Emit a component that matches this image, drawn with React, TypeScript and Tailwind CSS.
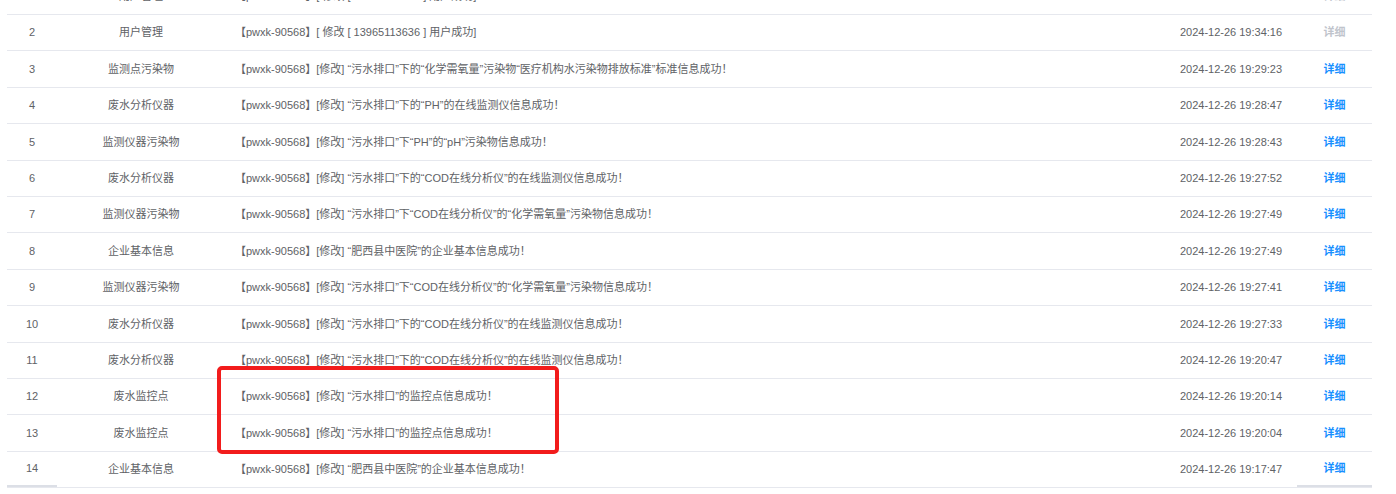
import React from "react";

interface LogRow {
  no: number;
  module: string;
  content: string;
  time: string;
  disabled?: boolean;
}

const PREFIX = "【pwxk-90568】[修改] ";
const PIPE = "“污水排口”下的“COD在线分析仪”的在线监测仪信息成功！";
const POLL = "“污水排口”下“COD在线分析仪”的“化学需氧量”污染物信息成功！";
const ENT = "“肥西县中医院”的企业基本信息成功！";
const POINT = "“污水排口”的监控点信息成功！";

const rows: LogRow[] = [
  { no: 1, module: "用户管理", content: "【pwxk-90568】[ 修改 [ 13965113636 ] 用户成功]", time: "2024-12-26 19:35:02", disabled: true },
  { no: 2, module: "用户管理", content: "【pwxk-90568】[ 修改 [ 13965113636 ] 用户成功]", time: "2024-12-26 19:34:16", disabled: true },
  { no: 3, module: "监测点污染物", content: PREFIX + "“污水排口”下的“化学需氧量”污染物“医疗机构水污染物排放标准”标准信息成功！", time: "2024-12-26 19:29:23" },
  { no: 4, module: "废水分析仪器", content: PREFIX + "“污水排口”下的“PH”的在线监测仪信息成功！", time: "2024-12-26 19:28:47" },
  { no: 5, module: "监测仪器污染物", content: PREFIX + "“污水排口”下“PH”的“pH”污染物信息成功！", time: "2024-12-26 19:28:43" },
  { no: 6, module: "废水分析仪器", content: PREFIX + PIPE, time: "2024-12-26 19:27:52" },
  { no: 7, module: "监测仪器污染物", content: PREFIX + POLL, time: "2024-12-26 19:27:49" },
  { no: 8, module: "企业基本信息", content: PREFIX + ENT, time: "2024-12-26 19:27:49" },
  { no: 9, module: "监测仪器污染物", content: PREFIX + POLL, time: "2024-12-26 19:27:41" },
  { no: 10, module: "废水分析仪器", content: PREFIX + PIPE, time: "2024-12-26 19:27:33" },
  { no: 11, module: "废水分析仪器", content: PREFIX + PIPE, time: "2024-12-26 19:20:47" },
  { no: 12, module: "废水监控点", content: PREFIX + POINT, time: "2024-12-26 19:20:14" },
  { no: 13, module: "废水监控点", content: PREFIX + POINT, time: "2024-12-26 19:20:04" },
  { no: 14, module: "企业基本信息", content: PREFIX + ENT, time: "2024-12-26 19:17:47" },
];

function App() {
  return (
    <div
      className="relative w-[1396px] h-[494px] overflow-hidden bg-white text-[11px] text-[#606266]"
      style={{ fontFamily: '"Liberation Sans", "Noto Sans CJK SC", sans-serif' }}
    >
      <div className="ml-[7px] mt-[-21.4px] w-[1365px] flex flex-col">
        {rows.map((row, i) => {
          const last = i === rows.length - 1;
          return (
            <div
              key={row.no}
              className="flex items-center h-[36.4px] border-b border-[#e6e8ee] whitespace-nowrap"
            >
              <div className={"w-[50px] h-full flex items-center justify-center " + (last ? "border-b-2 border-[#dcdfe6]" : "")}>
                {row.no}
              </div>
              <div className="w-[168px] h-full flex items-center justify-center">{row.module}</div>
              <div className="flex-1 h-full flex items-center pl-[10px]">{row.content}</div>
              <div className="w-[132px] h-full flex items-center justify-center">{row.time}</div>
              <div
                className={
                  "w-[75px] h-full flex items-center justify-center font-bold " +
                  (row.disabled ? "text-[#c0c4cc]" : "text-[#1890ff]") +
                  (last ? " border-b-2 border-[#dcdfe6]" : "")
                }
              >
                详细
              </div>
            </div>
          );
        })}
      </div>
      <div className="absolute left-[217px] top-[366px] w-[342px] h-[88px] border-[4px] border-[#f21c1c] rounded-[5px]" />
    </div>
  );
}

export default App;
